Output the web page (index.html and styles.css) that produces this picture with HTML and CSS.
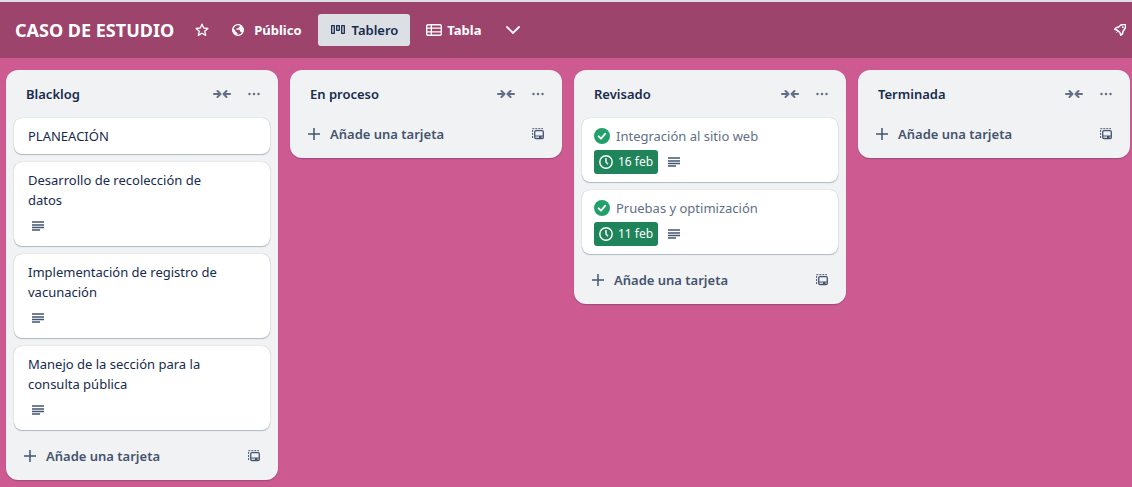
FILE: index.html
```html
<!DOCTYPE html>
<html lang="es">
<head>
<meta charset="utf-8">
<meta name="viewport" content="width=device-width, initial-scale=1">
<title>CASO DE ESTUDIO</title>
<link rel="stylesheet" href="styles.css">
</head>
<body>
<svg class="sprite" aria-hidden="true">
  <symbol id="collapse" viewBox="0 0 18 10"><path d="M1 5H7M4.500 2L7.500 5L4.500 8M17 5H11M13.500 2L10.500 5L13.500 8" fill="none" stroke="currentColor" stroke-width="2" stroke-linecap="round" stroke-linejoin="round"/></symbol>
  <symbol id="more" viewBox="0 0 12 4"><circle cx="1.500" cy="2" r="1.250"/><circle cx="6" cy="2" r="1.250"/><circle cx="10.500" cy="2" r="1.250"/></symbol>
  <symbol id="plus" viewBox="0 0 12 12"><path d="M6 0V12M0 6H12" fill="none" stroke="currentColor" stroke-width="1.500"/></symbol>
  <symbol id="template" viewBox="0 0 12 12"><path d="M0.600 10V0.700H11" fill="none" stroke="currentColor" stroke-width="1" stroke-dasharray="2 1"/><rect x="2.700" y="2.700" width="8.600" height="7.800" rx="1.200" fill="none" stroke="currentColor" stroke-width="1.300"/><path d="M3 7.500H11V8.500H3ZM7 8.500H9.500V10H7Z"/></symbol>
  <symbol id="lines" viewBox="0 0 12 10"><path d="M0 1H12M0 4H12M0 6.500H12M0 9H8" fill="none" stroke="currentColor" stroke-width="1.400"/></symbol>
  <symbol id="clock" viewBox="0 0 14 14"><circle cx="7" cy="7" r="6.200" fill="none" stroke="currentColor" stroke-width="1.400"/><path d="M7 3V7L9 9.300" fill="none" stroke="currentColor" stroke-width="1.400"/></symbol>
  <symbol id="check" viewBox="0 0 16 16"><circle cx="8" cy="8" r="8" fill="#22a06b"/><path d="M4.600 8.300L7 10.700L11.300 5.700" fill="none" stroke="#fff" stroke-width="1.800" stroke-linecap="round" stroke-linejoin="round"/></symbol>
</svg>

<header class="bar">
  <h1 class="board-name">CASO DE ESTUDIO</h1>
  <button class="icon-button star" aria-label="Marcar tablero"><svg width="14" height="14" viewBox="0 0 14 14"><path d="M7 1.200L8.700 5L12.900 5.400L9.700 8.200L10.700 12.400L7 10.200L3.300 12.400L4.300 8.200L1.100 5.400L5.300 5Z" fill="none" stroke="currentColor" stroke-width="1.300" stroke-linejoin="round"/></svg></button>
  <button class="bar-button visibility"><svg width="12" height="12" viewBox="0 0 12 12"><circle cx="6" cy="6" r="5.300" fill="none" stroke="currentColor" stroke-width="1.300"/><path d="M0.800 4L3.200 6.300V7.300L5.400 9V11.400A5.500 5.500 0 0 1 0.800 4ZM4 1L8 0.800V2.200L6.800 3.200V4.200H4.500V5.800H7.600L8.200 7.700H9.300L10 9.500L11.500 7V4.500L9 1L6 0.300Z"/></svg>Público</button>
  <button class="bar-button view active"><svg width="14" height="10" viewBox="0 0 14 10"><path d="M0.700 0.700H3.300V8.300H0.700ZM5.700 0.700H8.300V5.300H5.700ZM10.700 0.700H13.300V8.300H10.700Z" fill="none" stroke="currentColor" stroke-width="1.300" stroke-linejoin="round"/></svg>Tablero</button>
  <button class="bar-button view table-view"><svg width="16" height="12" viewBox="0 0 16 12"><rect x="0.700" y="0.700" width="14.600" height="10.600" rx="1.300" fill="none" stroke="currentColor" stroke-width="1.400"/><path d="M1 4.200H15M1 7.800H15M5.300 1V11" stroke="currentColor" stroke-width="1.300"/></svg>Tabla</button>
  <button class="icon-button" aria-label="Más vistas"><svg width="14" height="8" viewBox="0 0 14 8"><path d="M1 1L7 7L13 1" fill="none" stroke="currentColor" stroke-width="1.800" stroke-linecap="round"/></svg></button>
  <button class="icon-button rocket" aria-label="Power-Ups"><svg width="12" height="12" viewBox="0 0 12 12"><path d="M6.500 1.200Q9 0 11.400 0.600Q12 3.300 10.300 5.500L9 7.300L8.600 9.600L6.800 11.300L5.900 8.500L3.400 6.200L0.700 5.200L2.500 3.500L4.800 3Z" fill="none" stroke="currentColor" stroke-width="1.500" stroke-linejoin="round"/><circle cx="8.800" cy="3.200" r="0.900"/><path d="M3.800 7.200L2.500 8.700" stroke="currentColor"/></svg></button>
</header>

<main class="board">
  <section class="list">
    <div class="list-head"><h2 class="list-name">Blacklog</h2><button class="icon-button" aria-label="Contraer lista"><svg width="18" height="10"><use href="#collapse"/></svg></button><button class="icon-button" aria-label="Acciones"><svg width="12" height="4"><use href="#more"/></svg></button></div>
    <ul class="cards">
      <li class="card"><p class="card-text">PLANEACIÓN</p></li>
      <li class="card"><p class="card-text">Desarrollo de recolección de datos</p><div class="badges"><span class="description"><svg width="12" height="10"><use href="#lines"/></svg></span></div></li>
      <li class="card"><p class="card-text">Implementación de registro de vacunación</p><div class="badges"><span class="description"><svg width="12" height="10"><use href="#lines"/></svg></span></div></li>
      <li class="card"><p class="card-text">Manejo de la sección para la consulta pública</p><div class="badges"><span class="description"><svg width="12" height="10"><use href="#lines"/></svg></span></div></li>
    </ul>
    <div class="list-foot"><button class="add"><svg width="12" height="12"><use href="#plus"/></svg>Añade una tarjeta</button><button class="icon-button" aria-label="Crear desde plantilla"><svg width="12" height="12"><use href="#template"/></svg></button></div>
  </section>

  <section class="list">
    <div class="list-head"><h2 class="list-name">En proceso</h2><button class="icon-button" aria-label="Contraer lista"><svg width="18" height="10"><use href="#collapse"/></svg></button><button class="icon-button" aria-label="Acciones"><svg width="12" height="4"><use href="#more"/></svg></button></div>
    <div class="list-foot"><button class="add"><svg width="12" height="12"><use href="#plus"/></svg>Añade una tarjeta</button><button class="icon-button" aria-label="Crear desde plantilla"><svg width="12" height="12"><use href="#template"/></svg></button></div>
  </section>

  <section class="list">
    <div class="list-head"><h2 class="list-name">Revisado</h2><button class="icon-button" aria-label="Contraer lista"><svg width="18" height="10"><use href="#collapse"/></svg></button><button class="icon-button" aria-label="Acciones"><svg width="12" height="4"><use href="#more"/></svg></button></div>
    <ul class="cards">
      <li class="card"><div class="done"><svg width="16" height="16"><use href="#check"/></svg><p>Integración al sitio web</p></div><div class="badges"><span class="due"><svg width="14" height="14"><use href="#clock"/></svg>16 feb</span><span class="description"><svg width="12" height="10"><use href="#lines"/></svg></span></div></li>
      <li class="card"><div class="done"><svg width="16" height="16"><use href="#check"/></svg><p>Pruebas y optimización</p></div><div class="badges"><span class="due"><svg width="14" height="14"><use href="#clock"/></svg>11 feb</span><span class="description"><svg width="12" height="10"><use href="#lines"/></svg></span></div></li>
    </ul>
    <div class="list-foot"><button class="add"><svg width="12" height="12"><use href="#plus"/></svg>Añade una tarjeta</button><button class="icon-button" aria-label="Crear desde plantilla"><svg width="12" height="12"><use href="#template"/></svg></button></div>
  </section>

  <section class="list">
    <div class="list-head"><h2 class="list-name">Terminada</h2><button class="icon-button" aria-label="Contraer lista"><svg width="18" height="10"><use href="#collapse"/></svg></button><button class="icon-button" aria-label="Acciones"><svg width="12" height="4"><use href="#more"/></svg></button></div>
    <div class="list-foot"><button class="add"><svg width="12" height="12"><use href="#plus"/></svg>Añade una tarjeta</button><button class="icon-button" aria-label="Crear desde plantilla"><svg width="12" height="12"><use href="#template"/></svg></button></div>
  </section>
</main>
</body>
</html>
```
FILE: styles.css
```css
* {
  box-sizing: border-box;
}

body {
  margin: 0;
  min-height: 100vh;
  background: #cd5a91;
  color: #172b4d;
  font: 14px/20px "Segoe UI", "Noto Sans", sans-serif;
}

h1, h2, p, ul {
  margin: 0;
  padding: 0;
}

ul {
  list-style: none;
}

svg {
  display: block;
  flex: none;
  fill: currentColor;
}

.sprite {
  position: absolute;
  width: 0;
  height: 0;
}

button {
  display: flex;
  align-items: center;
  padding: 0;
  border: 0;
  border-radius: 3px;
  background: none;
  color: inherit;
  font: inherit;
  cursor: pointer;
}

.icon-button {
  justify-content: center;
  width: 32px;
  height: 32px;
  flex: none;
}

.bar {
  display: flex;
  align-items: center;
  padding: 12px 0 12px 15px;
  border-top: 2px solid #dcdfe4;
  background: #9c446c;
  color: #fff;
}

.board-name {
  margin-right: 12px;
  font-size: 18px;
  font-weight: 700;
  line-height: 32px;
  white-space: nowrap;
}

.bar-button {
  height: 32px;
  font-size: 13px;
  font-weight: 700;
}

.visibility {
  gap: 10px;
  padding: 0 16px 0 14px;
}

.view {
  gap: 7px;
  padding: 0 12px 0 13px;
}

.active {
  background: #dcdfe4;
  color: #172b4d;
  font-weight: 600;
}

.table-view {
  gap: 5px;
  padding: 0 16px;
}

.rocket {
  width: 24px;
  margin-left: auto;
}

.board {
  display: flex;
  align-items: flex-start;
  gap: 12px;
  padding: 12px 6px 7px;
}

.list {
  flex: 0 0 272px;
  padding: 8px;
  border-radius: 12px;
  background: #f1f2f4;
  box-shadow: 0 1px 1px #091e4240;
}

.list-head {
  display: flex;
  align-items: center;
  height: 32px;
  margin-bottom: 8px;
  padding-left: 12px;
  color: #626f86;
}

.list-name {
  flex: 1;
  color: #172b4d;
  font-size: 13px;
  font-weight: 600;
}

.cards {
  display: flex;
  flex-direction: column;
  gap: 8px;
  margin-bottom: 10px;
}

.card {
  padding: 8px 12px;
  border-radius: 8px;
  background: #fff;
  box-shadow: 0 1px 1px #091e4240, 0 0 1px #091e424f;
  font-size: 13px;
}

.card-text {
  max-width: 200px;
  padding-left: 2px;
}

.done {
  display: flex;
  align-items: center;
  gap: 6px;
  color: #626f86;
}

.badges {
  display: flex;
  gap: 4px;
  margin-top: 4px;
}

.description {
  display: flex;
  align-items: center;
  height: 24px;
  padding: 0 6px;
  color: #44546f;
}

.due {
  display: flex;
  align-items: center;
  gap: 5px;
  height: 24px;
  padding: 0 5px;
  border-radius: 3px;
  background: #1f845a;
  color: #fff;
  font-size: 12px;
}

.list-foot {
  display: flex;
  align-items: center;
  color: #44546f;
}

.add {
  flex: 1;
  gap: 10px;
  height: 32px;
  padding-left: 10px;
  font-size: 13px;
  font-weight: 600;
}
```
